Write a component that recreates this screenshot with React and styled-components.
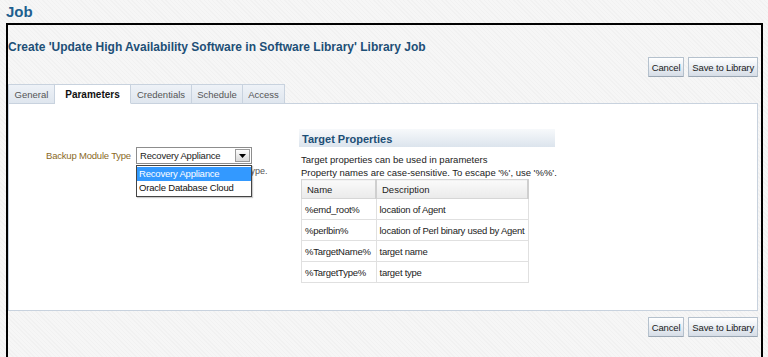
import React from "react";
import styled, { createGlobalStyle } from "styled-components";

const GlobalStyle = createGlobalStyle`
  html, body { margin: 0; padding: 0; }
  body {
    width: 768px;
    height: 357px;
    overflow: hidden;
    font-family: "Liberation Sans", Arial, sans-serif;
    font-size: 9.5px;
    color: #222;
    background-color: #f6f6f6;
    background-image: repeating-linear-gradient(45deg, rgba(0,0,0,0.018) 0 1px, transparent 1px 3px);
  }
`;

const PageTitle = styled.h1`
  margin: 0;
  height: 23px;
  padding-left: 6px;
  font-size: 15px;
  line-height: 23px;
  font-weight: bold;
  color: #1f5f8f;
`;

const Frame = styled.div`
  margin-left: 6px;
  width: 750px;
  height: 332px;
  border: 2px solid #000;
  border-bottom: none;
  padding-right: 3px;
  display: flex;
  flex-direction: column;
`;

const Heading = styled.h2`
  margin: 14px 0 0 0;
  font-size: 12px;
  line-height: 16px;
  font-weight: bold;
  color: #1d4f76;
`;

const ButtonRow = styled.div`
  display: flex;
  justify-content: flex-end;
  gap: 4px;
  margin-top: ${(p) => p.$top || 0}px;
`;

const Button = styled.button`
  height: 20px;
  padding: 0 3px;
  font-family: inherit;
  font-size: 9.5px;
  letter-spacing: -0.15px;
  color: #1a1a1a;
  border: 1px solid #b5c1cd;
  border-bottom-color: #9aa6b3;
  border-radius: 1px;
  background: linear-gradient(#ffffff, #e6ebf1 60%, #d6dde6);
  cursor: pointer;
`;

const TabBar = styled.div`
  display: flex;
  margin-top: 7px;
  height: 20px;
`;

const Tab = styled.div`
  display: flex;
  align-items: center;
  justify-content: center;
  width: ${(p) => p.$w}px;
  height: 20px;
  box-sizing: border-box;
  font-size: ${(p) => (p.$active ? "10px" : "9.5px")};
  font-weight: ${(p) => (p.$active ? "bold" : "normal")};
  color: ${(p) => (p.$active ? "#111" : "#555")};
  background: ${(p) => (p.$active ? "#fff" : "linear-gradient(#eef2f7, #dfe6ee)")};
  border: 1px solid #c8d2de;
  border-bottom: ${(p) => (p.$active ? "1px solid #fff" : "1px solid #c8d2de")};
  border-left: ${(p) => (p.$first ? "1px solid #c8d2de" : "none")};
`;

const TabFill = styled.div`
  flex: 1;
  border-bottom: 1px solid #c8d2de;
`;

const Panel = styled.div`
  height: 206px;
  background: #fff;
  border: 1px solid #c8d2de;
  border-top: none;
  display: flex;
`;

const LeftCol = styled.div`
  width: 290px;
  padding: 43px 0 0 37px;
  box-sizing: border-box;
`;

const FieldRow = styled.div`
  display: flex;
  align-items: flex-start;
  gap: 6px;
`;

const Label = styled.label`
  width: 84px;
  text-align: right;
  white-space: nowrap;
  font-size: 9.5px;
  letter-spacing: -0.2px;
  line-height: 17px;
  color: #8a6a1f;
`;

const SelectWrap = styled.div`
  position: relative;
  width: 116px;
`;

const SelectBox = styled.div`
  height: 17px;
  box-sizing: border-box;
  border: 1px solid #8d8d8d;
  background: #fff;
  display: flex;
  align-items: center;
  padding-left: 3px;
  font-size: 9.5px;
  letter-spacing: -0.2px;
`;

const SelectText = styled.span`
  flex: 1;
`;

const ArrowBtn = styled.span`
  width: 15px;
  height: 13px;
  margin-right: 1px;
  border: 1px solid #9a9a9a;
  box-sizing: border-box;
  background: linear-gradient(#fdfdfd, #d9d9d9);
  display: flex;
  align-items: center;
  justify-content: center;
`;

const Hint = styled.div`
  margin-top: 2px;
  font-size: 9px;
  color: #555;
  white-space: nowrap;
`;

const Dropdown = styled.ul`
  position: absolute;
  left: 0;
  top: 18px;
  width: 116px;
  margin: 0;
  padding: 1px 0;
  list-style: none;
  background: #fff;
  border: 1px solid #444;
  box-sizing: border-box;
  box-shadow: 1px 1px 1px rgba(0,0,0,0.2);
`;

const Option = styled.li`
  height: 14px;
  line-height: 14px;
  padding-left: 2px;
  font-size: 9.5px;
  letter-spacing: -0.2px;
  color: ${(p) => (p.$selected ? "#fff" : "#111")};
  background: ${(p) => (p.$selected ? "#3399ff" : "transparent")};
`;

const Props = styled.div`
  margin-top: 25px;
  width: 256px;
`;

const PropsHeader = styled.div`
  height: 18px;
  padding-left: 3px;
  background: linear-gradient(#f7f9fb, #dce4ed);
  font-size: 11px;
  font-weight: bold;
  line-height: 20px;
  color: #1d4f76;
  margin-bottom: 6px;
`;

const PropsText = styled.div`
  padding-left: 2px;
  font-size: 9.5px;
  line-height: 13px;
  white-space: nowrap;
`;

const Table = styled.table`
  margin-left: 2px;
  border-collapse: collapse;
  table-layout: fixed;
  width: 226px;
  font-size: 9.5px;
`;

const Th = styled.th`
  height: 18px;
  padding: 0 5px;
  text-align: left;
  font-weight: normal;
  width: ${(p) => p.$w}px;
  background: linear-gradient(#fafafa, #eaeaea);
  border: 1px solid #d6d6d6;
  border-right: 2px solid #cfcfcf;
  color: #222;
`;

const Td = styled.td`
  height: 20px;
  padding: 0 2px 0 3px;
  border: 1px solid #e0e0e0;
  white-space: nowrap;
  overflow: hidden;
  letter-spacing: -0.25px;
  color: #222;
`;

const BottomBar = styled.div`
  margin-top: 6px;
`;

const rows = [
  ["%emd_root%", "location of Agent"],
  ["%perlbin%", "location of Perl binary used by Agent"],
  ["%TargetName%", "target name"],
  ["%TargetType%", "target type"],
];

const tabs = [
  ["General", 47],
  ["Parameters", 76],
  ["Credentials", 61],
  ["Schedule", 51],
  ["Access", 42],
];

export default function App() {
  return (
    <>
      <GlobalStyle />
      <PageTitle>Job</PageTitle>
      <Frame>
        <Heading>Create 'Update High Availability Software in Software Library' Library Job</Heading>
        <ButtonRow $top={2}>
          <Button>Cancel</Button>
          <Button>Save to Library</Button>
        </ButtonRow>
        <TabBar>
          {tabs.map(([name, w], i) => (
            <Tab key={name} $w={w} $first={i === 0} $active={name === "Parameters"}>
              {name}
            </Tab>
          ))}
          <TabFill />
        </TabBar>
        <Panel>
          <LeftCol>
            <FieldRow>
              <Label>Backup Module Type</Label>
              <SelectWrap>
                <SelectBox>
                  <SelectText>Recovery Appliance</SelectText>
                  <ArrowBtn>
                    <svg width="7" height="4" viewBox="0 0 7 4">
                      <path d="M0 0 H7 L3.5 4 Z" fill="#000" />
                    </svg>
                  </ArrowBtn>
                </SelectBox>
                <Hint>Choose the backup module type.</Hint>
                <Dropdown>
                  <Option $selected>Recovery Appliance</Option>
                  <Option>Oracle Database Cloud</Option>
                </Dropdown>
              </SelectWrap>
            </FieldRow>
          </LeftCol>
          <Props>
            <PropsHeader>Target Properties</PropsHeader>
            <PropsText>Target properties can be used in parameters</PropsText>
            <PropsText>Property names are case-sensitive. To escape '%', use '%%'.</PropsText>
            <Table>
              <thead>
                <tr>
                  <Th $w={63}>Name</Th>
                  <Th $w={140}>Description</Th>
                </tr>
              </thead>
              <tbody>
                {rows.map((r) => (
                  <tr key={r[0]}>
                    <Td>{r[0]}</Td>
                    <Td>{r[1]}</Td>
                  </tr>
                ))}
              </tbody>
            </Table>
          </Props>
        </Panel>
        <BottomBar>
          <ButtonRow>
            <Button>Cancel</Button>
            <Button>Save to Library</Button>
          </ButtonRow>
        </BottomBar>
      </Frame>
    </>
  );
}
